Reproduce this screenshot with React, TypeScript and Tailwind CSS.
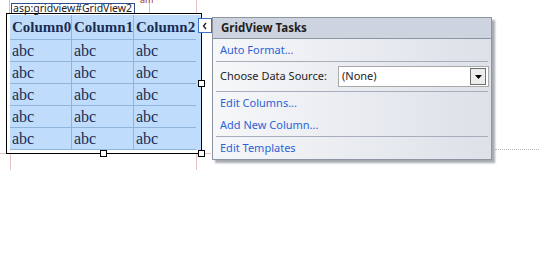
import React from "react";

const cols = ["Column0", "Column1", "Column2"];
const rows = [0, 1, 2, 3, 4];

const Sep = () => <div className="mx-[3px] h-px bg-[#a6aebb]" />;

const TaskLink = ({ children }: { children: React.ReactNode }) => (
  <div className="h-[22px] flex items-center pl-[7px] text-[11px] text-[#2b63d6]">{children}</div>
);

// designer adornments: snap guides + resize handles
const Adornments = () => (
  <svg className="absolute left-0 top-0 pointer-events-none" width="539" height="257">
    <g stroke="#e6c4c4" strokeWidth="1">
      <line x1="196.5" y1="0" x2="196.5" y2="13" />
      <line x1="10.5" y1="154" x2="10.5" y2="170" />
      <line x1="196.5" y1="154" x2="196.5" y2="170" />
      <line x1="0" y1="153.5" x2="6" y2="153.5" />
      <line x1="202" y1="153.5" x2="211" y2="153.5" />
    </g>
    <g fill="#fff" stroke="#000" strokeWidth="1">
      <rect x="198.5" y="80.5" width="6" height="6" />
      <rect x="100.5" y="150.5" width="6" height="6" />
      <rect x="198.5" y="150.5" width="6" height="6" />
    </g>
  </svg>
);

const App: React.FC = () => {
  return (
    <div
      className="relative w-[539px] h-[257px] bg-white overflow-hidden flex items-start pl-[6px]"
      style={{ fontFamily: '"Noto Sans", "Liberation Sans", sans-serif' }}
    >
      {/* control on design surface */}
      <div className="relative w-[196px] flex flex-col">
        <div className="h-[13px] pl-[3px] flex items-start">
          <div className="w-[141px] h-[13px] border-l border-r border-[#c4c4c4] bg-white pl-px pt-[3px] relative">
            <span className="absolute left-[130px] top-[-5px] text-[9px] leading-[9px] text-[#a03030]">am</span>
            <div className="relative w-[124px] h-[10px] border-t border-l border-r border-[#2e4f8f] bg-white text-[10.5px] leading-[9px] text-[#222] pl-px whitespace-nowrap">
              asp:gridview#GridView2
            </div>
          </div>
        </div>
        <div className="h-[141px] border border-black pl-[3px] pt-px">
          <div
            className="grid grid-cols-[62px_62px_62px] bg-[#bfdcfc] text-[#1b2d52]"
            style={{ fontFamily: '"Liberation Serif", serif' }}
          >
            {cols.map((c, i) => (
              <div
                key={c}
                className={
                  "h-[25px] flex items-center pl-[2px] text-[15px] font-bold border-b border-[#8fb3d9] " +
                  (i < 2 ? "border-r" : "")
                }
              >
                {c}
              </div>
            ))}
            {rows.map((r) =>
              cols.map((c, i) => (
                <div
                  key={r + c}
                  className={
                    "h-[22px] flex items-center pl-[2px] text-[16px] border-b border-[#8fb3d9] " +
                    (i < 2 ? "border-r" : "")
                  }
                >
                  abc
                </div>
              ))
            )}
          </div>
        </div>

        {/* smart tag glyph */}
        <div className="absolute left-[192px] top-[18px] w-[14px] h-[15px] bg-white border border-[#3c6fc6] flex items-center justify-center">
          <svg width="6" height="8" viewBox="0 0 6 8">
            <path d="M4 1 L1.5 4 L4 7" fill="none" stroke="#1c1c1c" strokeWidth="1.3" />
          </svg>
        </div>
      </div>

      {/* tasks panel */}
      <div className="ml-[10px] mt-[17px] w-[280px] h-[143px] shrink-0 border border-[#8d95a3] shadow-[3px_3px_2px_rgba(60,66,80,0.45)] bg-gradient-to-r from-[#f6f7f9] to-[#dde1e8] flex flex-col">
        <div className="h-[21px] bg-[#ced4df] border-b border-[#8d95a3] flex items-center pl-[8px] text-[11.5px] font-bold text-[#1e1e1e]">
          GridView Tasks
        </div>
        <TaskLink>Auto Format...</TaskLink>
        <Sep />
        <div className="h-[29px] flex items-center pl-[7px] pr-[2px] text-[11px] text-[#1e1e1e]">
          <span className="w-[118px]">Choose Data Source:</span>
          <div className="w-[151px] h-[21px] bg-white border border-[#a9a9a9] flex items-center justify-between pl-[3px] pr-[2px]">
            <span>(None)</span>
            <div className="w-[16px] h-[17px] border border-[#707070] bg-[#ececec] flex items-center justify-center">
              <svg width="7" height="4" viewBox="0 0 7 4">
                <path d="M0 0 H7 L3.5 4 Z" fill="#000" />
              </svg>
            </div>
          </div>
        </div>
        <Sep />
        <TaskLink>Edit Columns...</TaskLink>
        <TaskLink>Add New Column...</TaskLink>
        <Sep />
        <TaskLink>Edit Templates</TaskLink>
      </div>

      {/* dotted guide */}
      <div className="mt-[149px] ml-[3px] flex-1 border-t border-dotted border-[#b8b8b8]" />

      <Adornments />
    </div>
  );
};

export default App;
